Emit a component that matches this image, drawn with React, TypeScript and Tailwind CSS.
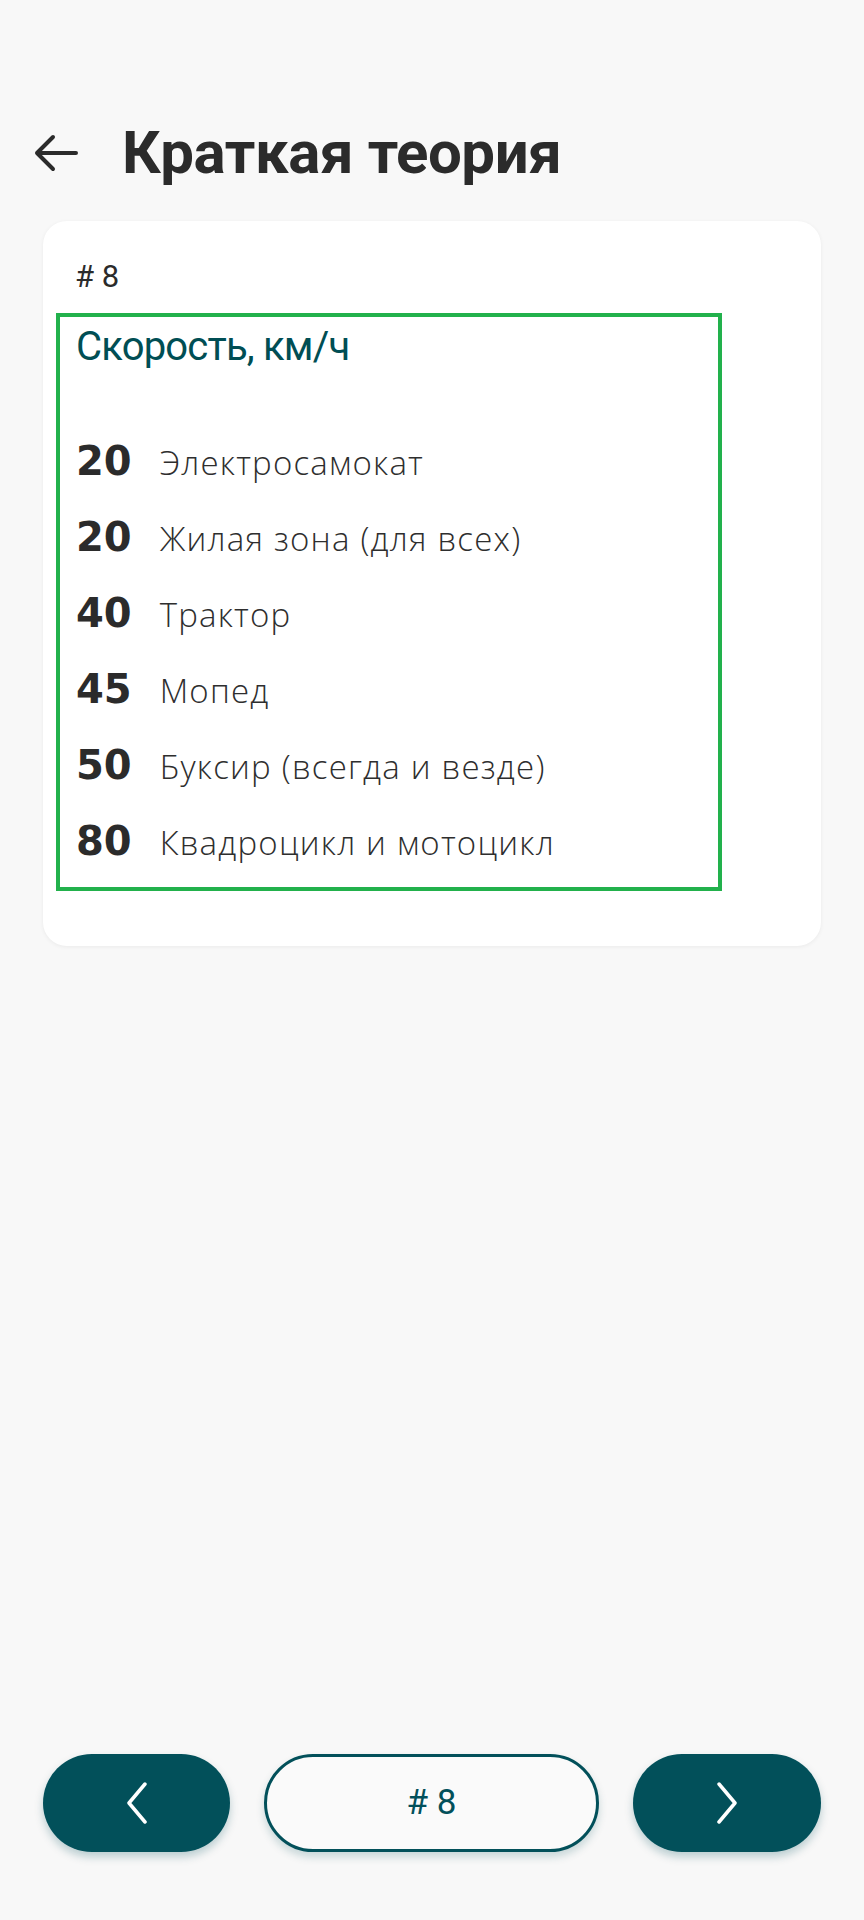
import React from 'react';

const speeds = [
  { value: '20', label: 'Электросамокат' },
  { value: '20', label: 'Жилая зона (для всех)' },
  { value: '40', label: 'Трактор' },
  { value: '45', label: 'Мопед' },
  { value: '50', label: 'Буксир (всегда и везде)' },
  { value: '80', label: 'Квадроцикл и мотоцикл' },
];

function BackArrow() {
  return (
    <svg width="44" height="38" viewBox="0 0 44 38" fill="none">
      <path
        d="M42 19H3M19 3L3 19l16 16"
        stroke="#2b2b2b"
        strokeWidth="4"
        strokeLinecap="round"
        strokeLinejoin="round"
      />
    </svg>
  );
}

function Chevron({ dir }: { dir: 'left' | 'right' }) {
  return (
    <svg width="24" height="42" viewBox="0 0 24 42" fill="none">
      <path
        d={dir === 'left' ? 'M20 2L4 21l16 19' : 'M4 2l16 19L4 40'}
        stroke="white"
        strokeWidth="3.5"
        strokeLinecap="round"
        strokeLinejoin="round"
      />
    </svg>
  );
}

export default function App() {
  return (
    <div className="min-h-screen flex flex-col bg-[#f8f8f8] font-['Roboto',sans-serif]">
      <div className="flex items-center h-[80px] mt-[113px] pl-[34px]">
        <BackArrow />
        <h1 className="ml-[44px] text-[60px] leading-none font-bold text-[#2b2b2b] tracking-[-0.4px]">
          Краткая теория
        </h1>
      </div>

      <div className="mx-[43px] mt-[28px] bg-white rounded-[24px] shadow-[0_1px_4px_rgba(0,0,0,0.06)] pt-[38px] pb-[55px] pl-[13px]">
        <div className="ml-[19px] h-[36px] text-[31px] leading-[36px] text-[#2b2b2b]">
          # 8
        </div>
        <div className="mt-[18px] w-[666px] border-4 border-[#22b14c] pt-[6px] pb-[8px] pl-[16px]">
          <div className="text-[40px] leading-[48px] text-[#004e54] tracking-[-0.8px]">
            Скорость, км/ч
          </div>
          <div className="mt-[52px]">
            {speeds.map((s, i) => (
              <div key={i} className="flex items-baseline h-[76px]">
                <span className="font-['DejaVu_Sans',sans-serif] font-bold text-[40px] leading-[76px] text-[#2b2b2b] mr-[28px]">
                  {s.value}
                </span>
                <span className="font-['Open_Sans',sans-serif] font-light text-[33px] leading-[40px] tracking-[1.2px] text-[#2e2e2e]">
                  {s.label}
                </span>
              </div>
            ))}
          </div>
        </div>
      </div>

      <div className="flex-1" />

      <div className="flex gap-[34px] px-[43px] pb-[68px]">
        <button
          type="button"
          className="w-[187px] h-[98px] rounded-full bg-[#02505a] flex items-center justify-center shadow-[0_5px_8px_rgba(2,80,90,0.25)]"
        >
          <Chevron dir="left" />
        </button>
        <button
          type="button"
          className="flex-1 h-[98px] rounded-full border-[3px] border-[#02505a] bg-[#fafafa] flex items-center justify-center text-[35px] text-[#02505a] shadow-[0_5px_8px_rgba(2,80,90,0.2)]"
        >
          # 8
        </button>
        <button
          type="button"
          className="w-[188px] h-[98px] rounded-full bg-[#02505a] flex items-center justify-center shadow-[0_5px_8px_rgba(2,80,90,0.25)]"
        >
          <Chevron dir="right" />
        </button>
      </div>
    </div>
  );
}
